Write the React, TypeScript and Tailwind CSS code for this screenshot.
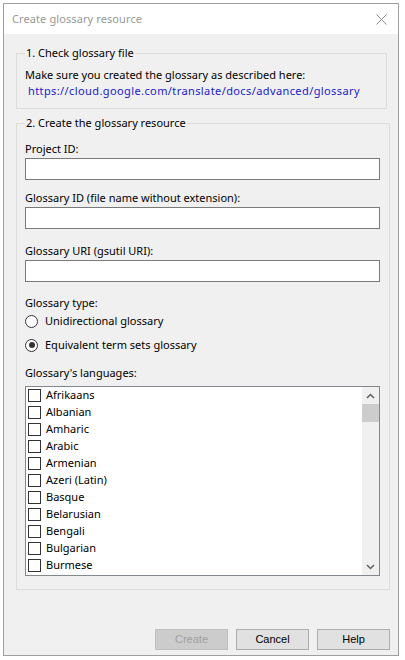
import { useState } from "react";

const languages = [
  "Afrikaans",
  "Albanian",
  "Amharic",
  "Arabic",
  "Armenian",
  "Azeri (Latin)",
  "Basque",
  "Belarusian",
  "Bengali",
  "Bulgarian",
  "Burmese",
];

const ui = { fontFamily: '"Noto Sans", "Open Sans", sans-serif' };
const btnFont = { fontFamily: '"Liberation Sans", Arial, sans-serif' };

function TextField({ label, top }: { label: string; top: string }) {
  return (
    <div className="flex flex-col">
      <label className={`${top} leading-[16px]`}>{label}</label>
      <input
        type="text"
        className="mt-[1px] h-[22px] w-full border border-[#7a7a7a] bg-white px-1 outline-none"
      />
    </div>
  );
}

function Radio({ label, checked, top }: { label: string; checked?: boolean; top: string }) {
  return (
    <div className={`${top} flex items-center leading-[16px]`}>
      <span className="flex h-[13px] w-[13px] items-center justify-center rounded-full border border-[#333] bg-white">
        {checked && <span className="h-[6px] w-[6px] rounded-full bg-[#333]" />}
      </span>
      <span className="ml-[7px]">{label}</span>
    </div>
  );
}

export default function App() {
  const [checked] = useState<Record<string, boolean>>({});

  return (
    <div className="h-[660px] w-[405px] bg-white pl-[3px] pt-[3px] text-[11px] text-black" style={ui}>
      <div className="flex h-[653px] w-[396px] flex-col border border-[#9f9f9f] bg-[#f0f0f0]">
        {/* Title bar */}
        <div className="flex h-[30px] items-center justify-between bg-white pl-[8px] pr-[10px]">
          <span className="text-[11px] tracking-[0.1px] text-[#999]">Create glossary resource</span>
          <svg width="11" height="11" viewBox="0 0 11 11" className="mr-[1px]">
            <path d="M0.5 0.5 L10.5 10.5 M10.5 0.5 L0.5 10.5" stroke="#8a8a8a" strokeWidth="1" />
          </svg>
        </div>

        {/* Body */}
        <div className="flex flex-1 flex-col pl-[12px] pr-[8px] pb-[5px]">
          {/* 1. Check glossary file */}
          <fieldset className="mt-[11px] w-[371px] border border-[#dcdcdc] px-[8px] pb-[10px]">
            <legend className="px-[1px] leading-[16px]">1. Check glossary file</legend>
            <p className="mt-[6px] leading-[16px]">Make sure you created the glossary as described here:</p>
            <a className="ml-[3px] block leading-[15px] tracking-[0.4px] text-[#1a1acc]">
              https://cloud.google.com/translate/docs/advanced/glossary
            </a>
          </fieldset>

          {/* 2. Create the glossary resource */}
          <fieldset className="mt-[6px] w-[374px] border border-[#dcdcdc] pl-[8px] pr-[9px] pb-[13px]">
            <legend className="px-[1px] leading-[16px]">2. Create the glossary resource</legend>
            <TextField label="Project ID:" top="mt-[10px]" />
            <TextField label="Glossary ID (file name without extension):" top="mt-[10px]" />
            <TextField label="Glossary URI (gsutil URI):" top="mt-[14px]" />

            <div className="mt-[13px] leading-[16px]">Glossary type:</div>
            <Radio label="Unidirectional glossary" top="mt-[2px]" />
            <Radio label="Equivalent term sets glossary" checked top="mt-[8px]" />

            <div className="mt-[12px] leading-[16px]">Glossary&apos;s languages:</div>
            <div className="mt-[5px] flex h-[190px] border border-[#828790] bg-white">
              <ul className="flex-1">
                {languages.map((lang) => (
                  <li key={lang} className="flex h-[17px] items-center pl-[2px]">
                    <span className="h-[13px] w-[13px] shrink-0 border border-[#333] bg-white">
                      {checked[lang] ? "✓" : null}
                    </span>
                    <span className="ml-[5px]">{lang}</span>
                  </li>
                ))}
              </ul>
              {/* Scrollbar */}
              <div className="flex w-[17px] flex-col bg-[#f0f0f0]">
                <div className="flex h-[17px] items-center justify-center">
                  <svg width="9" height="6" viewBox="0 0 9 6">
                    <path d="M1 5 L4.5 1.5 L8 5" stroke="#606060" strokeWidth="1.5" fill="none" />
                  </svg>
                </div>
                <div className="h-[18px] bg-[#cdcdcd]" />
                <div className="flex-1" />
                <div className="flex h-[17px] items-center justify-center">
                  <svg width="9" height="6" viewBox="0 0 9 6">
                    <path d="M1 1 L4.5 4.5 L8 1" stroke="#606060" strokeWidth="1.5" fill="none" />
                  </svg>
                </div>
              </div>
            </div>
          </fieldset>

          {/* Buttons */}
          <div className="mt-auto flex justify-end gap-[8px] text-[11px]" style={btnFont}>
            <button
              disabled
              className="h-[21px] w-[73px] border border-[#bfbfbf] bg-[#cccccc] text-[#a0a0a0]"
            >
              Create
            </button>
            <button className="h-[21px] w-[73px] border border-[#adadad] bg-[#e1e1e1]">Cancel</button>
            <button className="h-[21px] w-[73px] border border-[#adadad] bg-[#e1e1e1]">Help</button>
          </div>
        </div>
      </div>
    </div>
  );
}
